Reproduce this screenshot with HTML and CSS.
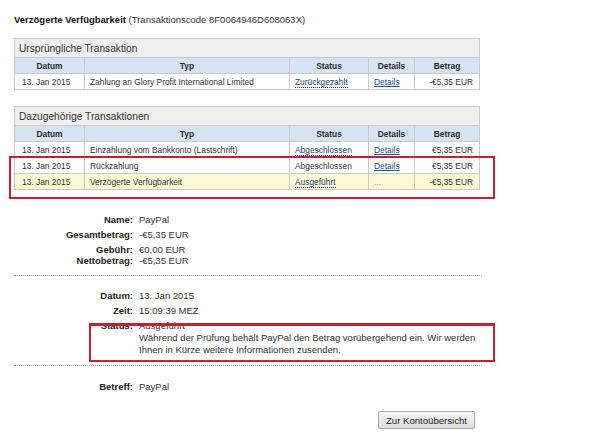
FILE: index.html
```html
<!DOCTYPE html>
<html lang="de">
<head>
<meta charset="utf-8">
<title>Verzögerte Verfügbarkeit</title>
<link rel="stylesheet" href="styles.css">
</head>
<body>
<div class="page">
  <div class="title"><b>Verzögerte Verfügbarkeit</b> (Transaktionscode 8F0064946D608063X)</div>

  <table class="tx tx-first">
    <colgroup>
      <col class="c-date"><col class="c-type"><col class="c-status"><col class="c-details"><col class="c-amount">
    </colgroup>
    <thead>
      <tr><th class="cap" colspan="5">Ursprüngliche Transaktion</th></tr>
      <tr class="head"><th>Datum</th><th>Typ</th><th>Status</th><th>Details</th><th>Betrag</th></tr>
    </thead>
    <tbody>
      <tr><td>13. Jan 2015</td><td>Zahlung an Glory Profit International Limited</td><td><span class="dot">Zurückgezahlt</span></td><td><a class="lnk">Details</a></td><td class="amt">-€5,35 EUR</td></tr>
    </tbody>
  </table>

  <div class="tx-wrap">
    <table class="tx">
      <colgroup>
        <col class="c-date"><col class="c-type"><col class="c-status"><col class="c-details"><col class="c-amount">
      </colgroup>
      <thead>
        <tr><th class="cap" colspan="5">Dazugehörige Transaktionen</th></tr>
        <tr class="head"><th>Datum</th><th>Typ</th><th>Status</th><th>Details</th><th>Betrag</th></tr>
      </thead>
      <tbody>
        <tr><td>13. Jan 2015</td><td>Einzahlung vom Bankkonto (Lastschrift)</td><td><span class="dot">Abgeschlossen</span></td><td><a class="lnk">Details</a></td><td class="amt">€5,35 EUR</td></tr>
        <tr><td>13. Jan 2015</td><td>Rückzahlung</td><td>Abgeschlossen</td><td><a class="lnk">Details</a></td><td class="amt">€5,35 EUR</td></tr>
        <tr class="hl"><td>13. Jan 2015</td><td>Verzögerte Verfügbarkeit</td><td><span class="dot">Ausgeführt</span></td><td class="muted">...</td><td class="amt">-€5,35 EUR</td></tr>
      </tbody>
    </table>
    <div class="mark mark-rows"></div>
  </div>

  <div class="info info-a">
    <div class="grp"><div class="row"><span class="lbl">Name:</span><span>PayPal</span></div></div>
    <div class="grp"><div class="row"><span class="lbl">Gesamtbetrag:</span><span>-€5,35 EUR</span></div></div>
    <div class="grp">
      <div class="row"><span class="lbl">Gebühr:</span><span>€0,00 EUR</span></div>
      <div class="row"><span class="lbl">Nettobetrag:</span><span>-€5,35 EUR</span></div>
    </div>
  </div>

  <hr class="sep">

  <div class="info info-b">
    <div class="grp"><div class="row"><span class="lbl">Datum:</span><span>13. Jan 2015</span></div></div>
    <div class="grp"><div class="row"><span class="lbl">Zeit:</span><span>15:09:39 MEZ</span></div></div>
    <div class="grp status">
      <div class="row"><span class="lbl">Status:</span><span>Ausgeführt<br>Während der Prüfung behält PayPal den Betrag vorübergehend ein. Wir werden<br>Ihnen in Kürze weitere Informationen zusenden.</span></div>
      <div class="mark mark-status"></div>
    </div>
  </div>

  <hr class="sep">

  <div class="info info-c">
    <div class="grp"><div class="row"><span class="lbl">Betreff:</span><span>PayPal</span></div></div>
  </div>

  <div class="actions"><button class="btn" type="button">Zur Kontoübersicht</button></div>
</div>
</body>
</html>
```
FILE: styles.css
```css
html, body {
  margin: 0;
  padding: 0;
  background: #fff;
}

body {
  font-family: "Liberation Sans", Arial, sans-serif;
  color: #333;
}

.page {
  padding: 12px 0 0 14px;
  width: 470px;
}

.title {
  font-size: 9.5px;
  line-height: 16px;
  color: #333;
  margin-bottom: 10px;
}

.title b {
  color: #111;
}

.tx {
  border-collapse: collapse;
  table-layout: fixed;
  width: 465px;
  font-size: 8.4px;
}

.tx-first {
  margin-bottom: 16px;
}

.c-date { width: 70px; }
.c-type { width: 205px; }
.c-status { width: 79px; }
.c-details { width: 46px; }
.c-amount { width: 65px; }

.tx th,
.tx td {
  border: 1px solid #c9c9c9;
  padding: 0 5px;
  height: 15px;
  white-space: nowrap;
  overflow: hidden;
}

.tx .cap {
  background: #efefef;
  font-weight: normal;
  text-align: left;
  font-size: 10.2px;
  height: 18px;
  padding-left: 4px;
  color: #333;
}

.tx .head th {
  background: #d6e3f2;
  font-weight: bold;
  text-align: center;
  color: #2b2b2b;
}

.tx td:first-child {
  padding-left: 7px;
}

.tx .amt {
  text-align: right;
  padding-right: 6px;
}

.tx .hl td {
  background: #fdf9d6;
}

.dot {
  color: #243f6a;
  border-bottom: 1px dotted #243f6a;
}

.lnk {
  color: #2a4f86;
  text-decoration: underline;
}

.muted {
  color: #999;
}

.tx-wrap {
  position: relative;
}

.mark {
  position: absolute;
  border: 2px solid #c5202f;
  box-sizing: border-box;
  pointer-events: none;
}

.mark-rows {
  left: -5px;
  top: 50px;
  width: 486px;
  height: 43px;
}

.info {
  font-size: 9.5px;
  line-height: 11px;
}

.info-a {
  margin-top: 24px;
}

.info-b {
  margin-top: 14px;
}

.info-c {
  margin-top: 15px;
}

.grp + .grp {
  margin-top: 4px;
}

.row {
  display: grid;
  grid-template-columns: 119px 1fr;
  column-gap: 6px;
}

.lbl {
  text-align: right;
  font-weight: bold;
  color: #222;
}

.status {
  position: relative;
  margin-top: 7px;
  line-height: 12px;
}

.mark-status {
  left: 75px;
  top: 3px;
  width: 406px;
  height: 39px;
  border-top-width: 3px;
  background: linear-gradient(#fff, #fff) top / 100% 0 no-repeat;
}

.sep {
  border: 0;
  border-top: 1px dotted #9a9a9a;
  margin: 9px 0 0;
  width: 468px;
  height: 0;
}

.status + .sep {
  margin-top: 5px;
}

.actions {
  display: flex;
  justify-content: flex-end;
  width: 461px;
  margin-top: 19px;
}

.btn {
  font-family: "Liberation Sans", Arial, sans-serif;
  font-size: 9.6px;
  color: #222;
  height: 18px;
  width: 97px;
  padding: 0;
  border: 1px solid #a9a9a9;
  border-radius: 2px;
  background: linear-gradient(#f7f7f7, #dedede);
}
```
